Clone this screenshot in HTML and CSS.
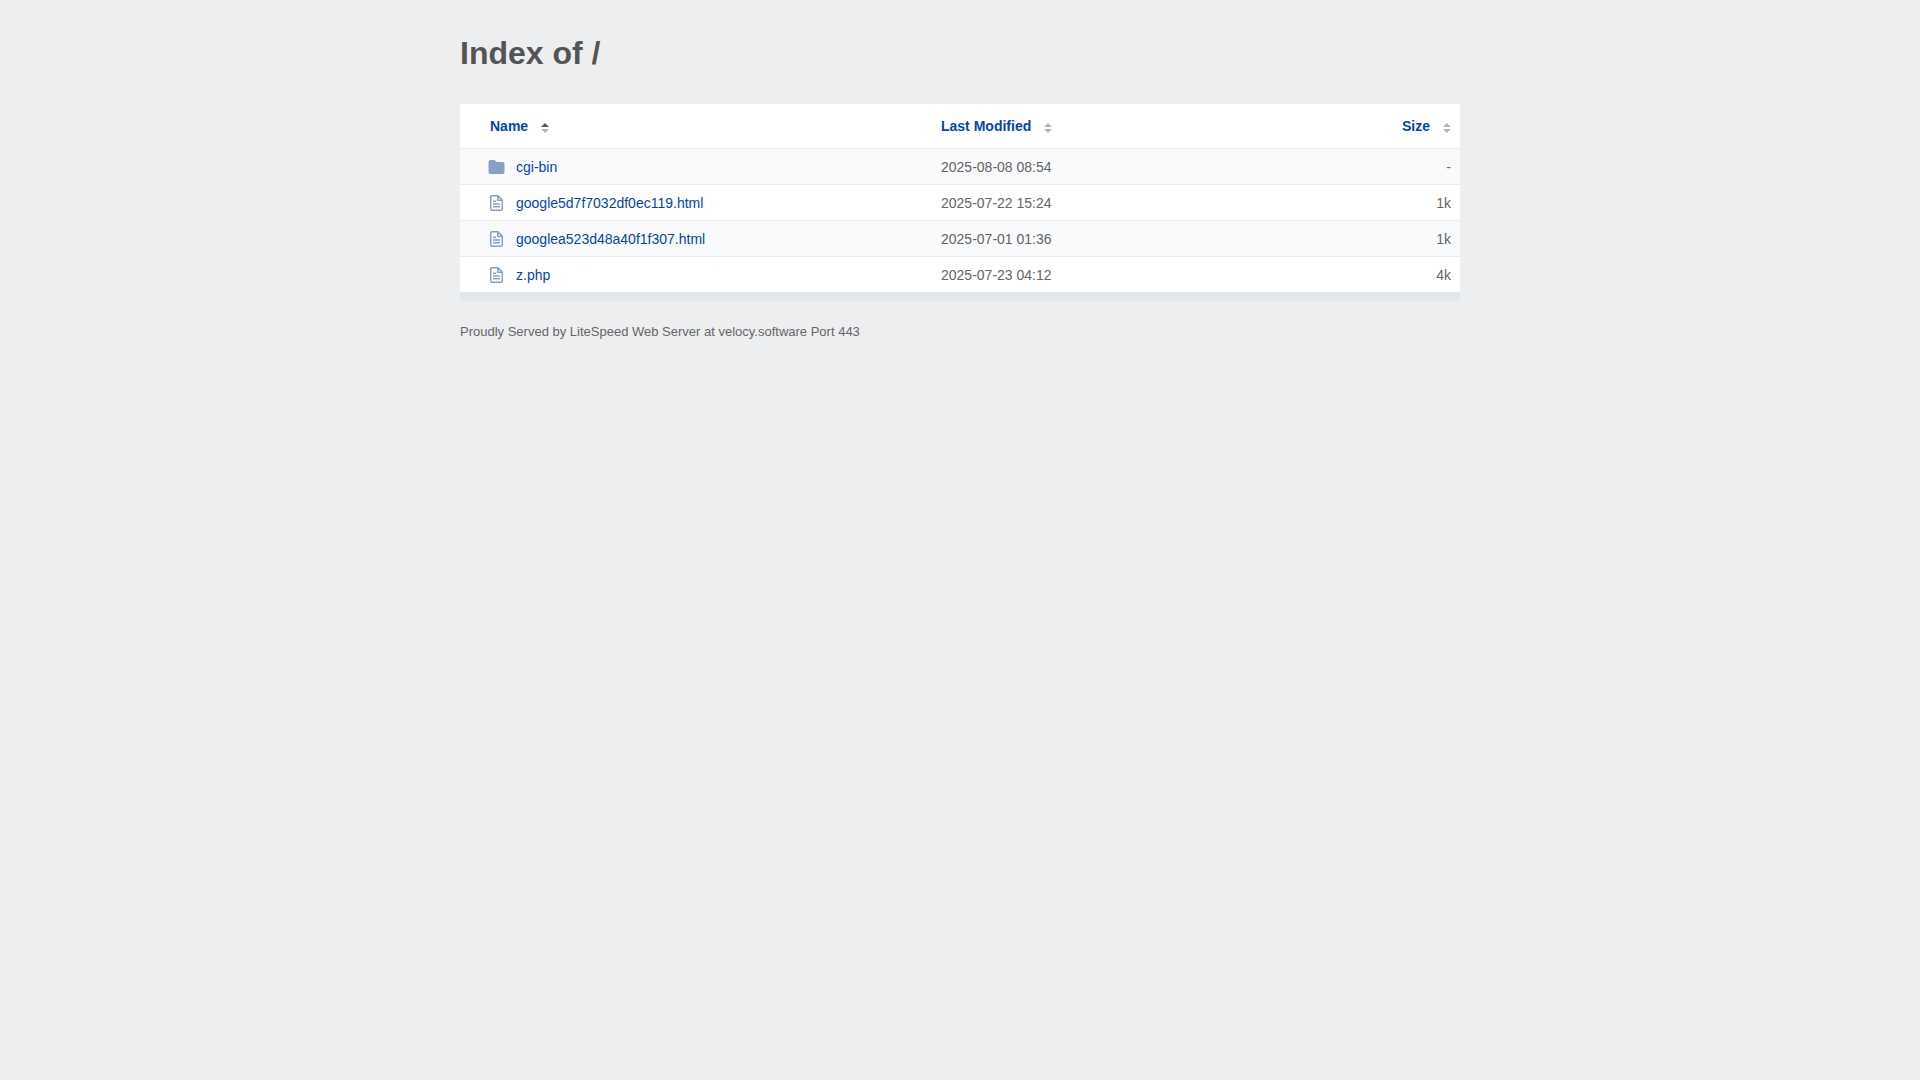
FILE: index.html
```html
<!DOCTYPE html>
<html lang="en">
<head>
<meta charset="utf-8">
<meta name="viewport" content="width=device-width, initial-scale=1">
<title>Index of /</title>
<link rel="stylesheet" href="styles.css">
</head>
<body>
<svg class="sprite" aria-hidden="true">
  <symbol id="folder" viewBox="0 0 17 16"><path d="M2.500 1h4l2 2h6a2 2 0 0 1 2 2v8a2 2 0 0 1-2 2h-12a2 2 0 0 1-2-2V3a2 2 0 0 1 2-2z" fill="currentColor"/></symbol>
  <symbol id="file" viewBox="0 0 17 16"><path d="M10 .8H4Q2.700.8 2.700 2.100v11.800q0 1.300 1.300 1.300h9q1.300 0 1.300-1.300V5zM9.700 1v4.300h4.400M5 6.300h3M5 8.900h7M5 11.700h7" fill="none" stroke="currentColor" stroke-width="1.500"/></symbol>
  <symbol id="sort" viewBox="0 0 8 10"><path class="up" d="M4 0l4 4H0z"/><path class="down" d="M4 10L0 6h8z"/></symbol>
</svg>
<main class="content">
  <h1 class="title">Index of /</h1>
  <table class="listing">
    <thead>
      <tr>
        <th class="name" aria-sort="ascending"><a class="sort-link active" href="#">Name<svg class="sort-icon" aria-hidden="true"><use href="#sort"/></svg></a></th>
        <th class="modified"><a class="sort-link" href="#">Last Modified<svg class="sort-icon" aria-hidden="true"><use href="#sort"/></svg></a></th>
        <th class="size"><a class="sort-link" href="#">Size<svg class="sort-icon" aria-hidden="true"><use href="#sort"/></svg></a></th>
      </tr>
    </thead>
    <tbody>
      <tr><td class="name"><a class="entry" href="#"><svg class="icon" aria-hidden="true"><use href="#folder"/></svg>cgi-bin</a></td><td>2025-08-08 08:54</td><td class="size">-</td></tr>
      <tr><td class="name"><a class="entry" href="#"><svg class="icon" aria-hidden="true"><use href="#file"/></svg>google5d7f7032df0ec119.html</a></td><td>2025-07-22 15:24</td><td class="size">1k</td></tr>
      <tr><td class="name"><a class="entry" href="#"><svg class="icon" aria-hidden="true"><use href="#file"/></svg>googlea523d48a40f1f307.html</a></td><td>2025-07-01 01:36</td><td class="size">1k</td></tr>
      <tr><td class="name"><a class="entry" href="#"><svg class="icon" aria-hidden="true"><use href="#file"/></svg>z.php</a></td><td>2025-07-23 04:12</td><td class="size">4k</td></tr>
    </tbody>
  </table>
  <footer class="footer">Proudly Served by LiteSpeed Web Server at velocy.software Port 443</footer>
</main>
</body>
</html>
```
FILE: styles.css
```css
* {
  box-sizing: border-box;
}

body {
  margin: 0;
  background: #edeef0;
  color: #656565;
  font-family: "Liberation Sans", Arial, sans-serif;
  font-size: 14px;
  line-height: 20px;
}

.sprite {
  display: none;
}

.content {
  max-width: 1020px;
  margin: 0 auto;
  padding: 32px 10px;
}

.title {
  margin: 0 0 30px;
  color: #545454;
  font-size: 32px;
  line-height: 42px;
}

.listing {
  width: 100%;
  table-layout: fixed;
  border-collapse: separate;
  border-spacing: 0;
  background: #fff;
  border-bottom: 9px solid #e3e7ea;
}

th {
  height: 45px;
  padding: 0 9px;
  border-bottom: 1px solid #ebedef;
  text-align: left;
}

td {
  height: 36px;
  padding: 0 9px;
  border-bottom: 1px solid #ebedef;
}

tbody tr:nth-child(odd) {
  background: #f9fafc;
}

tbody tr:last-child td {
  height: 35px;
  border-bottom: 0;
}

th.name {
  width: 472px;
  padding-left: 30px;
}

td.name {
  padding-left: 28px;
}

.size {
  text-align: right;
}

a {
  color: #0046ad;
  text-decoration: none;
}

a:hover {
  text-decoration: underline;
}

.sort-link {
  display: inline-flex;
  align-items: center;
  gap: 13px;
}

.sort-icon {
  width: 8px;
  height: 10px;
  margin-top: 4px;
  fill: #b3b3b3;
}

.active {
  --up: #555;
}

.up {
  fill: var(--up, #b3b3b3);
}

.entry {
  display: flex;
  align-items: center;
  gap: 11px;
}

.icon {
  width: 17px;
  height: 16px;
  color: #87a0c8;
}

.footer {
  margin-top: 21px;
  font-size: 13px;
}
```
